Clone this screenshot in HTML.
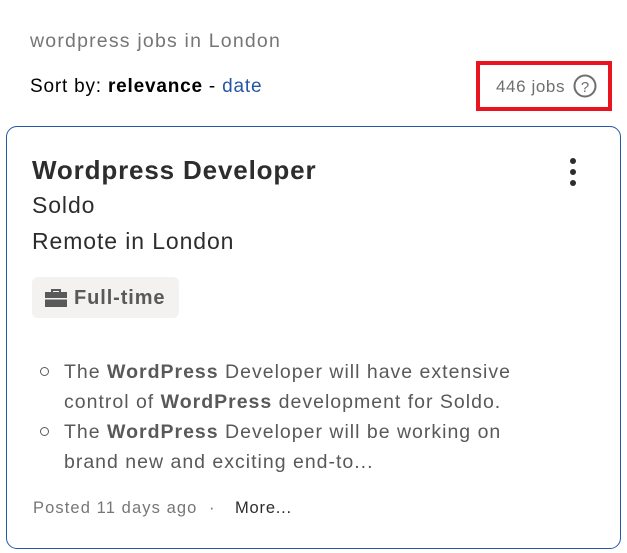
<!DOCTYPE html>
<html><head><meta charset="utf-8"><style>
*{margin:0;padding:0;box-sizing:border-box}
body{width:627px;height:553px;background:#fff;font-family:"Liberation Sans",sans-serif;position:relative;overflow:hidden;color:#2d2d2d}
.a{position:absolute;white-space:nowrap}
</style></head><body>
<div class="a" style="left:30px;top:30px;font-size:19.5px;color:#767676;letter-spacing:1.2px">wordpress jobs in London</div>
<div class="a" style="left:30px;top:76px;font-size:19px;color:#000;letter-spacing:.8px">Sort by: <b>relevance</b> - <span style="color:#2557a7">date</span></div>
<div class="a" style="left:476px;top:61px;width:136px;height:50px;border:4px solid #e8141f"></div>
<div class="a" style="left:496px;top:77px;font-size:17px;color:#6f6f6f;letter-spacing:.6px">446 jobs</div>
<svg class="a" style="left:572px;top:73px" width="26" height="26" viewBox="0 0 26 26"><circle cx="13" cy="13" r="10.5" fill="none" stroke="#6f6f6f" stroke-width="2"/><text x="13" y="19" text-anchor="middle" font-size="15" font-family="Liberation Sans" fill="#6f6f6f">?</text></svg>
<div class="a" style="left:6px;top:126px;width:615px;height:423px;border:1px solid #2557a7;border-radius:11px"></div>
<div class="a" style="left:32px;top:155px;font-size:26px;font-weight:bold;color:#2d2d2d;letter-spacing:.85px">Wordpress Developer</div>
<div class="a" style="left:570px;top:158px;width:6px;height:6px;border-radius:50%;background:#2d2d2d;box-shadow:0 11px 0 #2d2d2d,0 22px 0 #2d2d2d"></div>
<div class="a" style="left:32px;top:192px;font-size:23px;color:#2d2d2d;letter-spacing:.9px">Soldo</div>
<div class="a" style="left:32px;top:228px;font-size:23px;color:#2d2d2d;letter-spacing:.9px">Remote in London</div>
<div class="a" style="left:32px;top:277px;width:147px;height:41px;background:#f3f2f1;border-radius:6px"></div>
<svg class="a" style="left:44px;top:287px" width="24" height="22" viewBox="0 0 24 22"><path d="M7 5V2h10v3h6v15H1V5z M9 5h6V4H9z" fill="#595959" fill-rule="evenodd"/><rect x="1" y="11" width="22" height="1.5" fill="#f3f2f1"/></svg>
<div class="a" style="left:74px;top:287px;font-size:20px;font-weight:bold;color:#595959;letter-spacing:.9px">Full-time</div>
<div class="a" style="left:40px;top:367px;width:9px;height:9px;border:1.5px solid #595959;border-radius:50%"></div>
<div class="a" style="left:40px;top:427px;width:9px;height:9px;border:1.5px solid #595959;border-radius:50%"></div>
<div class="a" style="left:64px;top:357px;font-size:19.5px;line-height:30px;color:#595959;letter-spacing:1px">The <b>WordPress</b> Developer will have extensive<br>control of <b>WordPress</b> development for Soldo.<br>The <b>WordPress</b> Developer will be working on<br>brand new and exciting end-to...</div>
<div class="a" style="left:33px;top:499px;font-size:16.5px;color:#767676;letter-spacing:1.1px">Posted 11 days ago</div>
<div class="a" style="left:209px;top:499px;font-size:16.5px;color:#767676">·</div>
<div class="a" style="left:235px;top:499px;font-size:16.5px;color:#2d2d2d;letter-spacing:.8px">More...</div>
</body></html>
